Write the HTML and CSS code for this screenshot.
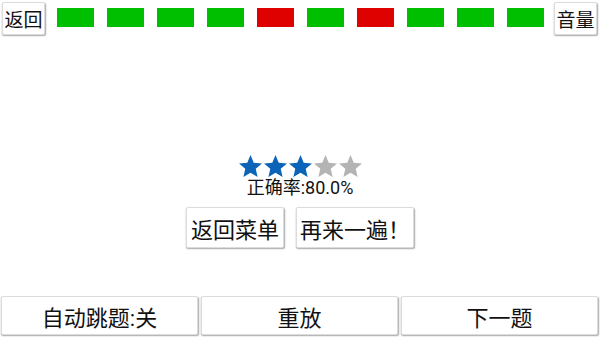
FILE: index.html
```html
<!DOCTYPE html>
<html>
<head>
<meta charset="utf-8">
<link rel="stylesheet" href="styles.css">
</head>
<body>
<div class="screen">
  <div class="topbar">
    <div class="btn small">返回</div>
    <div class="bars">
      <span class="bar ok"></span>
      <span class="bar ok"></span>
      <span class="bar ok"></span>
      <span class="bar ok"></span>
      <span class="bar bad"></span>
      <span class="bar ok"></span>
      <span class="bar bad"></span>
      <span class="bar ok"></span>
      <span class="bar ok"></span>
      <span class="bar ok"></span>
    </div>
    <div class="btn small">音量</div>
  </div>
  <div class="middle">
    <div class="stars">
      <svg class="star on" viewBox="2 2 20 19"><path d="M12 17.27L18.18 21l-1.64-7.03L22 9.24l-7.19-.61L12 2 9.19 8.63 2 9.24l5.46 4.73L5.82 21z"/></svg>
      <svg class="star on" viewBox="2 2 20 19"><path d="M12 17.27L18.18 21l-1.64-7.03L22 9.24l-7.19-.61L12 2 9.19 8.63 2 9.24l5.46 4.73L5.82 21z"/></svg>
      <svg class="star on" viewBox="2 2 20 19"><path d="M12 17.27L18.18 21l-1.64-7.03L22 9.24l-7.19-.61L12 2 9.19 8.63 2 9.24l5.46 4.73L5.82 21z"/></svg>
      <svg class="star off" viewBox="2 2 20 19"><path d="M12 17.27L18.18 21l-1.64-7.03L22 9.24l-7.19-.61L12 2 9.19 8.63 2 9.24l5.46 4.73L5.82 21z"/></svg>
      <svg class="star off" viewBox="2 2 20 19"><path d="M12 17.27L18.18 21l-1.64-7.03L22 9.24l-7.19-.61L12 2 9.19 8.63 2 9.24l5.46 4.73L5.82 21z"/></svg>
    </div>
    <div class="rate">正确率:80.0%</div>
    <div class="actions">
      <div class="btn big">返回菜单</div>
      <div class="btn big">再来一遍！</div>
    </div>
  </div>
  <div class="bottombar">
    <div class="btn wide">自动跳题:关</div>
    <div class="btn wide">重放</div>
    <div class="btn wide">下一题</div>
  </div>
</div>
</body>
</html>
```
FILE: styles.css
```css
html, body {
  margin: 0;
  padding: 0;
  background: #ffffff;
}
body {
  font-family: Roboto, "Noto Sans CJK SC", sans-serif;
  color: #111;
}
.screen {
  width: 600px;
  height: 337px;
  display: flex;
  flex-direction: column;
  overflow: hidden;
}
.btn {
  box-sizing: border-box;
  background: #fff;
  border: 1px solid #dcdcdc;
  border-radius: 2px;
  box-shadow: 0.5px 1px 1.5px rgba(0, 0, 0, 0.35);
  display: flex;
  align-items: center;
  justify-content: center;
  white-space: nowrap;
}
.topbar {
  display: flex;
  align-items: flex-start;
  padding: 2px 2px 0 2px;
  height: 37px;
  box-sizing: border-box;
}
.btn.small {
  width: 43px;
  height: 33px;
  font-size: 19px;
}
.bars {
  display: flex;
  gap: 13px;
  margin: 6px 10px 0 12px;
}
.bar {
  display: block;
  width: 37px;
  height: 19px;
}
.bar.ok { background: #00be00; }
.bar.bad { background: #df0000; }
.middle {
  flex: 1;
  display: flex;
  flex-direction: column;
  align-items: center;
  padding-top: 118px;
}
.stars {
  display: flex;
  gap: 2px;
  height: 22px;
  margin-left: 1px;
}
.star {
  width: 23px;
  height: 22px;
}
.star.on { fill: #0c64b8; }
.star.off { fill: #b4b4b4; }
.rate {
  font-size: 18px;
  line-height: 20px;
  margin-top: 1px;
}
.actions {
  display: flex;
  gap: 12px;
  margin-top: 9px;
}
.btn.big {
  height: 41px;
  font-size: 22px;
  padding: 0 4px;
}
.actions .btn.big:first-child { width: 98px; }
.actions .btn.big:last-child { width: 118px; }
.bottombar {
  display: flex;
  gap: 3px;
  padding: 0 2px 2px 1px;
}
.btn.wide {
  flex: 1;
  height: 39px;
  font-size: 22px;
}
```
